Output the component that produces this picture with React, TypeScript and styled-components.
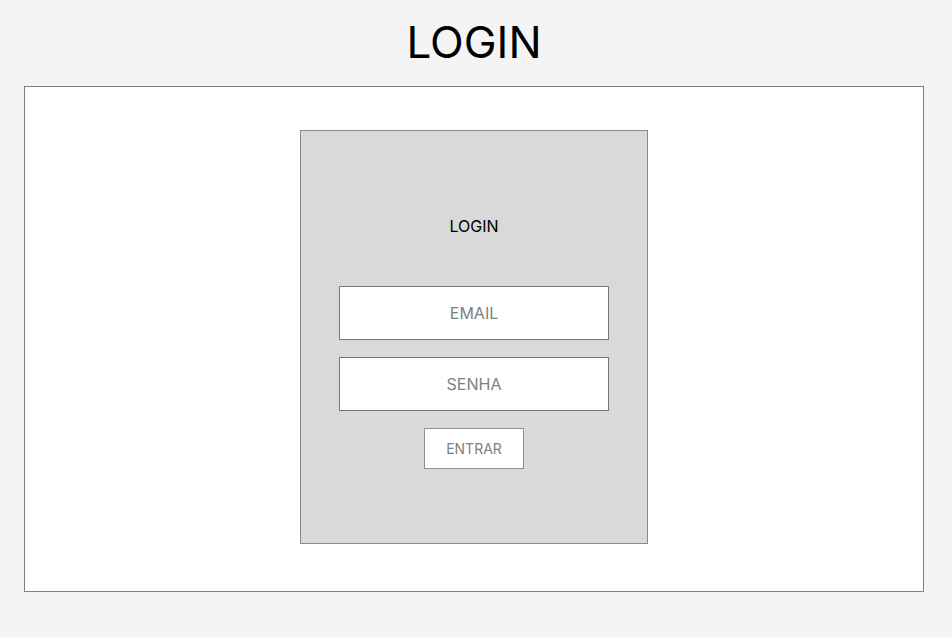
import React from "react";
import styled, { createGlobalStyle } from "styled-components";

const GlobalStyle = createGlobalStyle`
  html, body {
    margin: 0;
    padding: 0;
    background: #f4f4f4;
    font-family: Inter, "Noto Sans", sans-serif;
  }
`;

const Page = styled.div`
  width: 952px;
  height: 637px;
  display: flex;
  flex-direction: column;
  box-sizing: border-box;
  padding-left: 24px;
`;

const Title = styled.h1`
  margin: 0;
  width: 900px;
  height: 86px;
  display: flex;
  align-items: center;
  justify-content: center;
  font-size: 44px;
  font-weight: 400;
  color: #000;
  line-height: 1;
  padding-bottom: 3px;
  box-sizing: border-box;
`;

const Frame = styled.div`
  width: 900px;
  height: 506px;
  box-sizing: border-box;
  background: #ffffff;
  border: 1px solid #808080;
  display: flex;
  justify-content: center;
  padding-top: 43px;
`;

const Card = styled.div`
  width: 348px;
  height: 414px;
  box-sizing: border-box;
  background: #d9d9d9;
  border: 1px solid #8a8a8a;
  display: flex;
  flex-direction: column;
  align-items: center;
  padding-top: 85px;
`;

const CardTitle = styled.div`
  font-size: 16px;
  color: #000;
  line-height: 20px;
  margin-bottom: 50px;
`;

const Field = styled.input`
  width: 270px;
  height: 54px;
  box-sizing: border-box;
  background: #fff;
  border: 1px solid #777;
  font-family: Inter, "Noto Sans", sans-serif;
  font-size: 16px;
  text-align: center;
  color: #333;
  margin: 0 0 17px 0;
  padding: 0;
  outline: none;
  &::placeholder {
    color: #808080;
  }
`;

const Button = styled.button`
  width: 100px;
  height: 41px;
  box-sizing: border-box;
  background: #fff;
  border: 1px solid #8f8f8f;
  font-family: Inter, "Noto Sans", sans-serif;
  font-size: 14px;
  color: #808080;
  padding: 0;
  cursor: pointer;
`;

export default function App() {
  return (
    <>
      <GlobalStyle />
      <Page>
        <Title>LOGIN</Title>
        <Frame>
          <Card>
            <CardTitle>LOGIN</CardTitle>
            <Field type="email" placeholder="EMAIL" />
            <Field type="password" placeholder="SENHA" />
            <Button>ENTRAR</Button>
          </Card>
        </Frame>
      </Page>
    </>
  );
}
